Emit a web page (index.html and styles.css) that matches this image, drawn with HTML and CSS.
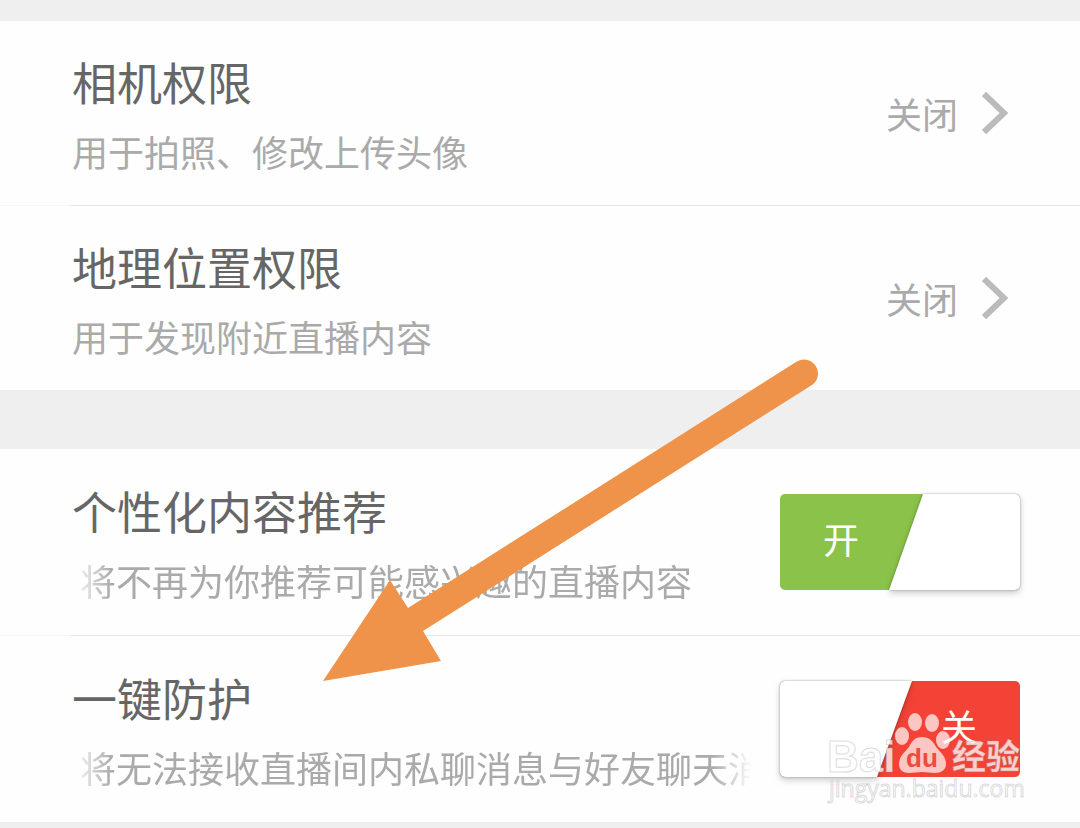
FILE: index.html
```
<!DOCTYPE html>
<html lang="zh-CN">
<head>
  <meta charset="UTF-8" />
  <meta name="viewport" content="width=device-width, initial-scale=1.0" />
  <title>隐私设置</title>
  <link rel="stylesheet" href="styles.css">
</head>
<body>
  <main class="settings">
    <section class="group">
      <a class="row" href="#camera">
        <div class="info">
          <div class="title">相机权限</div>
          <div class="desc">用于拍照、修改上传头像</div>
        </div>
        <span class="status">关闭</span>
        <svg class="chevron" viewBox="0 0 28 44" aria-hidden="true"><path d="M2 3 L22 22 L2 41" /></svg>
      </a>
      <a class="row" href="#location">
        <div class="info">
          <div class="title">地理位置权限</div>
          <div class="desc">用于发现附近直播内容</div>
        </div>
        <span class="status">关闭</span>
        <svg class="chevron" viewBox="0 0 28 44" aria-hidden="true"><path d="M2 3 L22 22 L2 41" /></svg>
      </a>
    </section>

    <section class="group">
      <div class="row row-switch">
        <div class="info">
          <label class="title" for="recommend">个性化内容推荐</label>
          <div class="desc marquee">将不再为你推荐可能感兴趣的直播内容</div>
        </div>
        <div class="switch">
          <input type="checkbox" id="recommend" checked />
          <span class="switch-color"><span class="switch-text">开</span></span>
          <span class="switch-thumb"><span class="switch-face"></span></span>
        </div>
      </div>
      <div class="row row-switch">
        <div class="info">
          <label class="title" for="protect">一键防护</label>
          <div class="desc marquee">将无法接收直播间内私聊消息与好友聊天消息</div>
        </div>
        <div class="switch">
          <input type="checkbox" id="protect" />
          <span class="switch-color"><span class="switch-text">关</span></span>
          <span class="switch-thumb"><span class="switch-face"></span></span>
        </div>
        <svg class="watermark" viewBox="0 0 210 100">
          <text class="wm-text wm-brand" x="7" y="68">Bai</text>
          <g class="wm-paw">
            <ellipse cx="82" cy="32" rx="7" ry="9" />
            <ellipse cx="95" cy="18" rx="7" ry="9" />
            <ellipse cx="112" cy="19" rx="7" ry="9" />
            <ellipse cx="123" cy="36" rx="7" ry="9" />
            <path d="M102 33 C109 33 113 37 116 43 C120 48 126 52 126 60 C126 66 121 69 115 69 C110 69 107 68 102 68 C97 68 94 69 89 69 C83 69 79 66 79 60 C79 52 85 48 89 43 C92 37 95 33 102 33 Z" />
          </g>
          <text class="wm-du" x="86" y="63">du</text>
          <text class="wm-text wm-cn" x="132" y="65">经验</text>
          <text class="wm-text wm-url" x="9" y="93">jingyan.baidu.com</text>
        </svg>
      </div>
    </section>

    <svg class="arrow" viewBox="0 0 500 326" aria-hidden="true">
      <path d="M2 323 L69 222 L87 250 L475 4 A14 14 0 0 1 491 27 L102 273 L120 303 Z" />
    </svg>
  </main>
</body>
</html>
```
FILE: styles.css
```
html, body {
  margin: 0;
  padding: 0;
  min-height: 100%;
  background-color: #efefef;
  font-family: 'Noto Sans CJK SC', sans-serif;
}

.settings {
  position: relative;
  display: flex;
  flex-direction: column;
  gap: 59px;
  padding: 21px 0 4px;
}

.group {
  background-color: #fefefe;
}

.row {
  position: relative;
  display: flex;
  align-items: center;
  padding: 29px 70px 29px 72px;
  color: inherit;
  text-decoration: none;
}

.row + .row {
  border-top: 1px solid #e9e9e9;
  border-image: linear-gradient(to right, #f6f6f6 72px, #e6e6e6 72px) 1;
}

.row-switch {
  gap: 28px;
  padding: 30px 60px 30px 72px;
}

.info {
  flex: 1;
  min-width: 0;
}

.title {
  display: block;
  margin-bottom: 12px;
  font-size: 45px;
  line-height: 64px;
  color: #666;
}

.desc {
  font-size: 36px;
  line-height: 50px;
  color: #aaa;
  white-space: nowrap;
}

.marquee {
  padding-left: 8px;
  overflow: hidden;
  -webkit-mask-image: linear-gradient(to right, transparent, #000 40px, #000 calc(100% - 40px), transparent);
  mask-image: linear-gradient(to right, transparent, #000 40px, #000 calc(100% - 40px), transparent);
}

.status {
  font-size: 36px;
  line-height: 50px;
  color: #aaa;
}

.chevron {
  width: 28px;
  height: 44px;
  margin-left: 24px;
  fill: none;
  stroke: #bbb;
  stroke-width: 6;
}

.switch {
  position: relative;
  display: flex;
  width: 240px;
  height: 96px;
  border-radius: 5px;
}

.switch input {
  position: absolute;
  inset: 0;
  z-index: 1;
  width: 100%;
  height: 100%;
  margin: 0;
  opacity: 0;
  cursor: pointer;
}

.switch-color {
  display: flex;
  flex: 1;
  align-items: center;
  justify-content: flex-end;
  padding: 0 43px 8px;
  border-radius: 5px;
  background-color: #f44336;
}

.switch input:checked ~ .switch-color {
  justify-content: flex-start;
  background-color: #8bc34a;
}

.switch-text {
  font-size: 36px;
  line-height: 50px;
  color: #fff;
}

/* the filter sits on the wrapper so the shadow follows the slanted edge */
.switch-thumb {
  position: absolute;
  inset: 0;
  filter: drop-shadow(0 0 1px rgba(0, 0, 0, 0.3)) drop-shadow(0 3px 3px rgba(0, 0, 0, 0.2));
}

.switch-face {
  display: block;
  height: 100%;
  border-radius: 5px;
  background-color: #fff;
  clip-path: polygon(0 0, 132px 0, 97px 100%, 0 100%);
}

.switch input:checked ~ .switch-thumb .switch-face {
  clip-path: polygon(143px 0, 100% 0, 100% 100%, 109px 100%);
}

.arrow {
  position: absolute;
  top: 358px;
  left: 321px;
  width: 500px;
  height: 326px;
  fill: #ee9349;
  pointer-events: none;
}

.watermark {
  position: absolute;
  right: 50px;
  bottom: 18px;
  z-index: 2;
  width: 210px;
  height: 100px;
  pointer-events: none;
}

.wm-text {
  fill: rgba(255, 255, 255, 0.75);
  stroke: rgba(150, 150, 150, 0.35);
  stroke-width: 1;
}

.wm-brand {
  font: bold 44px 'Liberation Sans', sans-serif;
}

.wm-cn {
  font-size: 34px;
  font-weight: 700;
}

.wm-url {
  font: 23px 'Open Sans', sans-serif;
}

.wm-paw {
  fill: rgba(255, 255, 255, 0.7);
}

.wm-du {
  font: bold 26px 'Liberation Sans', sans-serif;
  fill: #ee4a40;
}
```
